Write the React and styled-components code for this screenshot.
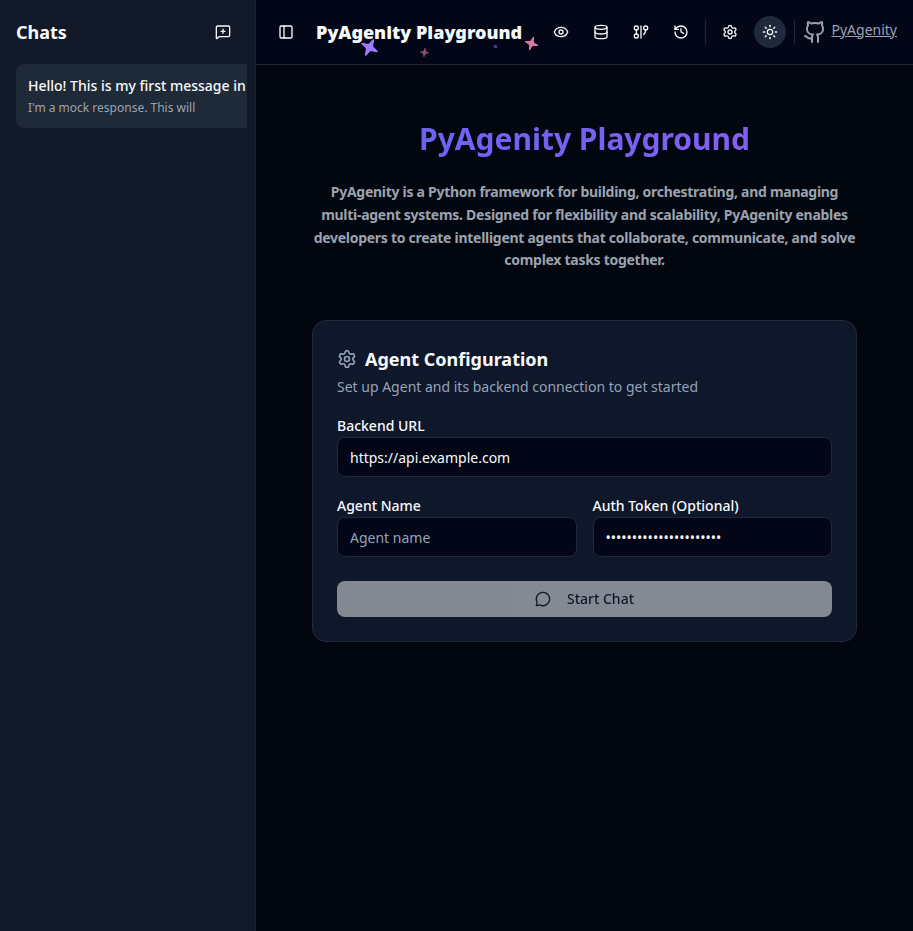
import React from "react";
import styled, { createGlobalStyle } from "styled-components";
import {
  MessageSquarePlus, PanelLeft, Eye, Database, GitGraph, History,
  Settings, Sun, Github, MessageCircle,
} from "lucide-react";

const GlobalStyle = createGlobalStyle`
  *, *::before, *::after { box-sizing: border-box; }
  body { margin: 0; background: #02060f; color: #f8fafc; font-family: "Noto Sans", sans-serif; }
  h1, h2, h3, p { margin: 0; }
  button, input { font: inherit; }
`;

const Layout = styled.div`
  display: flex;
  height: 100vh;
  overflow: hidden;
`;

const Sidebar = styled.aside`
  width: 256px;
  flex: none;
  background: #111827;
  border-right: 1px solid #1b2434;
`;

const SidebarHeader = styled.div`
  display: flex;
  align-items: center;
  justify-content: space-between;
  height: 64px;
  padding: 0 16px;
`;

const SidebarTitle = styled.h2`
  font-size: 18px;
  line-height: 28px;
  font-weight: 700;
`;

const IconButton = styled.button`
  display: inline-flex;
  align-items: center;
  justify-content: center;
  flex: none;
  width: 32px;
  height: 32px;
  padding: 0;
  border: 0;
  border-radius: 50%;
  color: #f8fafc;
  background: ${(p) => (p.$active ? "#1e293b" : "transparent")};
`;

const ThreadList = styled.div`
  margin: 0 8px 0 16px;
  overflow: hidden;
`;

const Thread = styled.div`
  width: 260px;
  height: 64px;
  padding: 12px;
  border-radius: 8px;
  background: #1f2a39;
  white-space: nowrap;
`;

const ThreadTitle = styled.h3`
  font-size: 14px;
  line-height: 20px;
  font-weight: 500;
`;

const ThreadPreview = styled.p`
  margin-top: 4px;
  font-size: 12px;
  line-height: 16px;
  color: #9ca3af;
`;

const Content = styled.div`
  display: flex;
  flex-direction: column;
  flex: 1;
  min-width: 0;
`;

const Header = styled.header`
  display: flex;
  align-items: center;
  justify-content: space-between;
  height: 65px;
  padding: 0 16px 1px 14px;
  background: #020617;
  border-bottom: 1px solid #1e293b;
`;

const Brand = styled.div`
  display: flex;
  align-items: center;
  gap: 14px;
`;

const BrandName = styled.div`
  position: relative;
  font-size: 18px;
  line-height: 28px;
  font-weight: 900;
  white-space: nowrap;
`;

const Sparkle = styled.svg`
  position: absolute;
  left: ${(p) => p.$x}px;
  top: ${(p) => p.$y}px;
  width: 21px;
  height: 21px;
  opacity: ${(p) => p.$opacity};
  transform: scale(${(p) => p.$scale}) rotate(${(p) => p.$turn}deg);
  fill: ${(p) => p.$color};
`;

const Tools = styled.div`
  display: flex;
  align-items: center;
  gap: 8px;
`;

const Divider = styled.div`
  width: 1px;
  height: 24px;
  background: #1e293b;
`;

const RepoLink = styled.a`
  display: flex;
  align-items: center;
  gap: 4px;
  color: #9ca3af;
  font-size: 14px;
  line-height: 20px;
  text-decoration: underline;
`;

const RepoName = styled.span`
  padding-bottom: 4px;
`;

const Main = styled.main`
  flex: 1;
  padding: 52px 56px;
`;

const Hero = styled.section`
  display: flex;
  flex-direction: column;
  align-items: center;
  text-align: center;
`;

const HeroTitle = styled.h1`
  width: 100%;
  font-size: 30px;
  line-height: 44px;
  font-weight: 700;
  color: transparent;
  background: linear-gradient(90deg, #6366f1, #8b5cf6);
  background-clip: text;
`;

const HeroText = styled.p`
  margin-top: 20px;
  font-size: 14px;
  line-height: 22.75px;
  font-weight: 700;
  letter-spacing: -0.02em;
  color: #9ca3af;
`;

const Card = styled.section`
  margin-top: 48px;
  padding: 24px;
  border: 1px solid #1e293b;
  border-radius: 14px;
  background: #0f172a;
`;

const CardTitle = styled.h2`
  display: flex;
  align-items: center;
  gap: 8px;
  font-size: 18px;
  line-height: 28px;
  font-weight: 700;
  svg { color: #94a3b8; }
`;

const CardNote = styled.p`
  margin-top: 4px;
  font-size: 14px;
  line-height: 20px;
  color: #94a3b8;
`;

const Fields = styled.div`
  display: grid;
  grid-template-columns: 1fr 1fr;
  gap: 18px 16px;
  margin: 18px 0 24px;
`;

const Field = styled.label`
  display: block;
  grid-column: ${(p) => (p.$wide ? "1 / -1" : "auto")};
  font-size: 14px;
  line-height: 22px;
  font-weight: 500;
`;

const Input = styled.input`
  display: block;
  width: 100%;
  height: 40px;
  padding: 0 12px;
  border: 1px solid #1e293b;
  border-radius: 8px;
  outline: 0;
  background: #020617;
  color: #f8fafc;
  font-size: 14px;
  font-weight: 400;
  &::placeholder { color: #94a3b8; opacity: 1; }
`;

const StartButton = styled.button`
  display: flex;
  align-items: center;
  justify-content: center;
  gap: 16px;
  width: 100%;
  height: 36px;
  border: 0;
  border-radius: 8px;
  background: #f8fafc;
  color: #0f172a;
  font-size: 14px;
  line-height: 20px;
  font-weight: 500;
  opacity: 0.5;
`;

const STAR =
  "M9.825.844c.23-.629 1.12-.629 1.35 0l.687 1.876C12.4 4.192 12.392 6.392 13.5 7.5s3.308 1.1 4.78 1.638l1.876.687c.63.23.63 1.12 0 1.35l-1.876.687C16.808 12.4 14.608 12.392 13.5 13.5s-1.1 3.308-1.638 4.78l-.687 1.876c-.23.63-1.12.63-1.35 0l-.687-1.876C8.6 16.808 8.608 14.608 7.5 13.5s-3.308-1.1-4.78-1.638L.844 11.175c-.629-.23-.629-1.12 0-1.35l1.876-.687C4.192 8.6 6.392 8.608 7.5 7.5s1.1-3.308 1.638-4.78z";

const sparkles = [
  { x: 43, y: 19, scale: 0.92, turn: 28, color: "#9E7AFF", opacity: 1 },
  { x: 97.5, y: 24, scale: 0.46, turn: 8, color: "#FE8BBB", opacity: 0.55 },
  { x: 168.8, y: 18, scale: 0.24, turn: 45, color: "#9E7AFF", opacity: 0.6 },
  { x: 205, y: 15, scale: 0.69, turn: 18, color: "#FE8BBB", opacity: 0.85 },
  { x: 5.5, y: 19, scale: 0.06, turn: 0, color: "#FE8BBB", opacity: 0.6 },
];

export default function App() {
  return (
    <Layout>
      <GlobalStyle />
      <Sidebar>
        <SidebarHeader>
          <SidebarTitle>Chats</SidebarTitle>
          <IconButton aria-label="New chat"><MessageSquarePlus size={16} /></IconButton>
        </SidebarHeader>
        <ThreadList>
          <Thread>
            <ThreadTitle>Hello! This is my first message in</ThreadTitle>
            <ThreadPreview>I'm a mock response. This will</ThreadPreview>
          </Thread>
        </ThreadList>
      </Sidebar>
      <Content>
        <Header>
          <Brand>
            <IconButton aria-label="Toggle sidebar"><PanelLeft size={16} /></IconButton>
            <BrandName>
              PyAgenity Playground
              {sparkles.map((s) => (
                <Sparkle key={s.x} viewBox="0 0 21 21" $x={s.x} $y={s.y} $scale={s.scale} $turn={s.turn} $color={s.color} $opacity={s.opacity}>
                  <path d={STAR} />
                </Sparkle>
              ))}
            </BrandName>
          </Brand>
          <Tools>
            <IconButton aria-label="View"><Eye size={16} /></IconButton>
            <IconButton aria-label="State"><Database size={16} /></IconButton>
            <IconButton aria-label="Graph"><GitGraph size={16} /></IconButton>
            <IconButton aria-label="History"><History size={16} /></IconButton>
            <Divider />
            <IconButton aria-label="Settings"><Settings size={16} /></IconButton>
            <IconButton aria-label="Theme" $active><Sun size={16} /></IconButton>
            <Divider />
            <RepoLink>
              <Github size={24} />
              <RepoName>PyAgenity</RepoName>
            </RepoLink>
          </Tools>
        </Header>
        <Main>
          <Hero>
            <HeroTitle>PyAgenity Playground</HeroTitle>
            <HeroText>
              PyAgenity is a Python framework for building, orchestrating, and managing multi-agent
              systems. Designed for flexibility and scalability, PyAgenity enables developers to
              create intelligent agents that collaborate, communicate, and solve complex tasks
              together.
            </HeroText>
          </Hero>
          <Card>
            <CardTitle><Settings size={20} />Agent Configuration</CardTitle>
            <CardNote>Set up Agent and its backend connection to get started</CardNote>
            <Fields>
              <Field $wide>
                Backend URL
                <Input defaultValue="https://api.example.com" />
              </Field>
              <Field>
                Agent Name
                <Input placeholder="Agent name" />
              </Field>
              <Field>
                Auth Token (Optional)
                <Input type="password" defaultValue="mock-auth-token-secret" />
              </Field>
            </Fields>
            <StartButton><MessageCircle size={16} />Start Chat</StartButton>
          </Card>
        </Main>
      </Content>
    </Layout>
  );
}
